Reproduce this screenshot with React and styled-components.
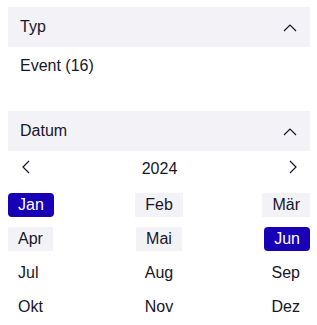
import React from "react";
import styled, { createGlobalStyle } from "styled-components";

const GlobalStyle = createGlobalStyle`
  body {
    margin: 0;
    background: #ffffff;
    font-family: "Liberation Sans", Arial, sans-serif;
    color: #16162a;
  }
`;

const Panel = styled.div`
  padding: 7px 7px 0 8px;
  display: flex;
  flex-direction: column;
`;

const Section = styled.section`
  display: flex;
  flex-direction: column;
  margin-bottom: ${(p) => p.$gap || 0}px;
`;

const Header = styled.div`
  height: 40px;
  padding: 0 13px 0 12px;
  display: flex;
  align-items: center;
  justify-content: space-between;
  background-color: #f3f3f7;
  font-size: 16px;
`;

const Body = styled.div`
  padding: 9px 12px 0;
  font-size: 16px;
  line-height: 20px;
`;

const YearRow = styled.div`
  height: 32px;
  padding: 0 13px 0 14px;
  display: flex;
  align-items: center;
  justify-content: space-between;
  font-size: 16px;
`;

const Year = styled.span`
  padding-top: 3px;
`;

const Months = styled.div`
  margin-top: 10px;
  display: grid;
  grid-template-columns: repeat(3, 1fr);
  row-gap: 10px;
`;

const Month = styled.div`
  justify-self: ${(p) => p.$align};
  height: 24px;
  padding: 0 10px;
  display: flex;
  align-items: center;
  font-size: 16px;
  border-radius: ${(p) => (p.$state === "selected" ? "4px" : "0")};
  background-color: ${(p) =>
    p.$state === "selected" ? "#1800b6" : p.$state === "range" ? "#f3f3f7" : "transparent"};
  color: ${(p) => (p.$state === "selected" ? "#ffffff" : "#16162a")};
`;

const Chevron = ({ dir }) => {
  const paths = {
    up: "M1 8 L7 2 L13 8",
    left: "M7 1 L1 7 L7 13",
    right: "M1 1 L7 7 L1 13",
  };
  const size = dir === "up" ? { w: 14, h: 9 } : { w: 8, h: 14 };
  return (
    <svg width={size.w} height={size.h} viewBox={`0 0 ${size.w} ${size.h}`} fill="none">
      <path d={paths[dir]} stroke="#16162a" strokeWidth="1.2" />
    </svg>
  );
};

const months = [
  ["Jan", "selected"],
  ["Feb", "range"],
  ["Mär", "range"],
  ["Apr", "range"],
  ["Mai", "range"],
  ["Jun", "selected"],
  ["Jul"],
  ["Aug"],
  ["Sep"],
  ["Okt"],
  ["Nov"],
  ["Dez"],
];

const aligns = ["start", "center", "end"];

export default function App() {
  return (
    <>
      <GlobalStyle />
      <Panel>
        <Section $gap={35}>
          <Header>
            <span>Typ</span>
            <Chevron dir="up" />
          </Header>
          <Body>Event (16)</Body>
        </Section>
        <Section>
          <Header>
            <span>Datum</span>
            <Chevron dir="up" />
          </Header>
          <YearRow>
            <Chevron dir="left" />
            <Year>2024</Year>
            <Chevron dir="right" />
          </YearRow>
          <Months>
            {months.map(([name, state], i) => (
              <Month key={name} $state={state} $align={aligns[i % 3]}>
                {name}
              </Month>
            ))}
          </Months>
        </Section>
      </Panel>
    </>
  );
}
